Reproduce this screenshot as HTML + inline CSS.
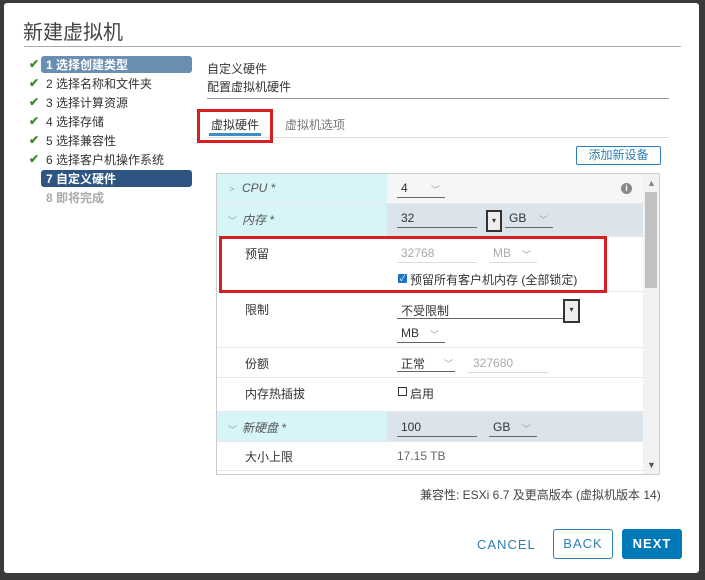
<!DOCTYPE html>
<html><head><meta charset="utf-8"><style>
*{box-sizing:border-box;margin:0;padding:0}
body{width:705px;height:580px;background:#3a3a3a;font-family:"Liberation Sans","Noto Sans CJK SC",sans-serif;font-size:12px;color:#333;position:relative;overflow:hidden}
.dlg{position:absolute;left:4px;top:3px;width:695px;height:570px;background:#fff;border-radius:3px}
.a{position:absolute;white-space:nowrap}
.chk{position:absolute;color:#3c8c2c;font-size:12px;font-weight:bold}
.row{position:absolute;left:217px;width:426px;border-bottom:1px solid #e4e8eb}
.ul{position:absolute;border-bottom:1px solid #666;height:18px}
.grey{color:#aaa}
.caret{color:#999;font-size:9px}
</style></head><body>
<div class="dlg"></div>
<div class="a" style="left:23px;top:16px;font-size:20px;color:#444">新建虚拟机</div>
<div class="a" style="left:24px;top:46px;width:657px;height:1px;background:#aaa"></div>

<div class="a" style="left:41px;top:56px;width:151px;height:17px;background:#6a8db2;border-radius:3px"></div>
<div class="a" style="left:41px;top:170px;width:151px;height:17px;background:#2e5582;border-radius:3px"></div>
<div class="chk" style="left:29px;top:57px">✔</div>
<div class="chk" style="left:29px;top:76px">✔</div>
<div class="chk" style="left:29px;top:95px">✔</div>
<div class="chk" style="left:29px;top:114px">✔</div>
<div class="chk" style="left:29px;top:133px">✔</div>
<div class="chk" style="left:29px;top:152px">✔</div>
<div class="a" style="left:46px;top:56px;color:#fff;font-weight:bold">1 选择创建类型</div>
<div class="a" style="left:46px;top:75px">2 选择名称和文件夹</div>
<div class="a" style="left:46px;top:94px">3 选择计算资源</div>
<div class="a" style="left:46px;top:113px">4 选择存储</div>
<div class="a" style="left:46px;top:132px">5 选择兼容性</div>
<div class="a" style="left:46px;top:151px">6 选择客户机操作系统</div>
<div class="a" style="left:46px;top:170px;color:#fff;font-weight:bold">7 自定义硬件</div>
<div class="a" style="left:46px;top:189px;color:#aaa;font-weight:bold">8 即将完成</div>

<div class="a" style="left:207px;top:60px">自定义硬件</div>
<div class="a" style="left:207px;top:78px">配置虚拟机硬件</div>
<div class="a" style="left:207px;top:98px;width:462px;height:1px;background:#999"></div>
<div class="a" style="left:211px;top:116px">虚拟硬件</div>
<div class="a" style="left:209px;top:133px;width:52px;height:3px;background:#3d8fc6"></div>
<div class="a" style="left:285px;top:116px;color:#777">虚拟机选项</div>
<div class="a" style="left:207px;top:137px;width:462px;height:1px;background:#ddd"></div>
<div class="a" style="left:197px;top:109px;width:76px;height:34px;border:3px solid #d81e1e"></div>

<div class="a" style="left:576px;top:146px;width:85px;height:19px;border:1px solid #2d7fb5;border-radius:2px;color:#2d7fb5;text-align:center;line-height:17px">添加新设备</div>

<div class="a" style="left:216px;top:173px;width:444px;height:302px;border:1px solid #ccc;background:#fff"></div>
<div class="row" style="top:174px;height:30px;background:linear-gradient(90deg,#d7f5f8 170px,#f4f6f8 170px)"></div>
<div class="row" style="top:204px;height:33px;background:linear-gradient(90deg,#d7f5f8 170px,#dbe4eb 170px)"></div>
<div class="row" style="top:237px;height:55px"></div>
<div class="row" style="top:292px;height:56px"></div>
<div class="row" style="top:348px;height:30px"></div>
<div class="row" style="top:378px;height:34px"></div>
<div class="row" style="top:412px;height:30px;background:linear-gradient(90deg,#d7f5f8 170px,#dbe4eb 170px)"></div>
<div class="row" style="top:442px;height:29px"></div>
<div class="a" style="left:643px;top:174px;width:16px;height:300px;background:#f2f2f2"></div>
<div class="a" style="left:645px;top:192px;width:12px;height:96px;background:#c1c1c1"></div>
<div class="a caret" style="left:647px;top:178px;color:#888">▲</div>
<div class="a caret" style="left:647px;top:460px;color:#555">▼</div>

<div class="a caret" style="left:229px;top:184px">&gt;</div>
<div class="a" style="left:242px;top:181px;font-style:italic;color:#555">CPU *</div>
<div class="a" style="left:401px;top:181px">4</div><div class="a caret" style="left:431px;top:183px">﹀</div>
<div class="ul" style="left:397px;top:180px;width:48px"></div>
<div class="a" style="left:621px;top:183px;width:11px;height:11px;border-radius:50%;background:#888;color:#fff;font-size:9px;font-weight:bold;text-align:center;line-height:11px">i</div>

<div class="a caret" style="left:228px;top:214px">﹀</div>
<div class="a" style="left:242px;top:211px;font-style:italic;color:#555">内存 *</div>
<div class="a" style="left:401px;top:211px">32</div>
<div class="ul" style="left:397px;top:210px;width:80px"></div>
<div class="a" style="left:486px;top:210px;width:16px;height:22px;border:2px solid #333;background:#eee;font-size:8px;text-align:center;line-height:18px">▾</div>
<div class="a" style="left:509px;top:211px">GB</div><div class="a caret" style="left:539px;top:213px">﹀</div>
<div class="ul" style="left:505px;top:210px;width:48px"></div>

<div class="a" style="left:245px;top:245px">预留</div>
<div class="a grey" style="left:401px;top:246px">32768</div>
<div class="ul" style="left:397px;top:245px;width:80px;border-color:#ddd"></div>
<div class="a grey" style="left:493px;top:246px">MB</div><div class="a caret" style="left:522px;top:248px">﹀</div>
<div class="ul" style="left:489px;top:245px;width:48px;border-color:#ddd"></div>
<div class="a" style="left:398px;top:274px;width:9px;height:9px;background:#1a73c8;border-radius:1px;color:#fff;font-size:8px;line-height:9px;text-align:center">✓</div>
<div class="a" style="left:410px;top:271px">预留所有客户机内存 (全部锁定)</div>
<div class="a" style="left:219px;top:236px;width:388px;height:57px;border:3px solid #d81e1e"></div>

<div class="a" style="left:245px;top:301px">限制</div>
<div class="a" style="left:401px;top:302px">不受限制</div>
<div class="ul" style="left:397px;top:301px;width:166px"></div>
<div class="a" style="left:563px;top:299px;width:17px;height:24px;border:2px solid #333;background:#eee;font-size:8px;text-align:center;line-height:18px">▾</div>
<div class="a" style="left:401px;top:326px">MB</div><div class="a caret" style="left:430px;top:328px">﹀</div>
<div class="ul" style="left:397px;top:325px;width:48px"></div>

<div class="a" style="left:245px;top:355px">份额</div>
<div class="a" style="left:401px;top:355px">正常</div><div class="a caret" style="left:444px;top:357px">﹀</div>
<div class="ul" style="left:397px;top:354px;width:58px"></div>
<div class="a grey" style="left:473px;top:356px">327680</div>
<div class="ul" style="left:468px;top:355px;width:80px;border-color:#ddd"></div>

<div class="a" style="left:245px;top:385px">内存热插拔</div>
<div class="a" style="left:398px;top:387px;width:9px;height:9px;border:1px solid #333"></div>
<div class="a" style="left:410px;top:385px">启用</div>

<div class="a caret" style="left:228px;top:423px">﹀</div>
<div class="a" style="left:242px;top:419px;font-style:italic;color:#555">新硬盘 *</div>
<div class="a" style="left:401px;top:420px">100</div>
<div class="ul" style="left:397px;top:419px;width:80px"></div>
<div class="a" style="left:493px;top:420px">GB</div><div class="a caret" style="left:522px;top:422px">﹀</div>
<div class="ul" style="left:489px;top:419px;width:48px"></div>

<div class="a" style="left:245px;top:448px">大小上限</div>
<div class="a" style="left:397px;top:449px;color:#666">17.15 TB</div>

<div class="a" style="left:420px;top:486px;width:240px;text-align:right;color:#444">兼容性: ESXi 6.7 及更高版本 (虚拟机版本 14)</div>

<div class="a" style="left:477px;top:537px;color:#2d7fb5;letter-spacing:1px;font-size:13px">CANCEL</div>
<div class="a" style="left:553px;top:529px;width:60px;height:30px;border:1px solid #2d7fb5;border-radius:3px;color:#2d7fb5;text-align:center;line-height:28px;letter-spacing:1px;font-size:13px">BACK</div>
<div class="a" style="left:622px;top:529px;width:60px;height:30px;background:#0079b8;border-radius:3px;color:#fff;font-weight:bold;text-align:center;line-height:30px;letter-spacing:1px;font-size:13px">NEXT</div>
</body></html>
